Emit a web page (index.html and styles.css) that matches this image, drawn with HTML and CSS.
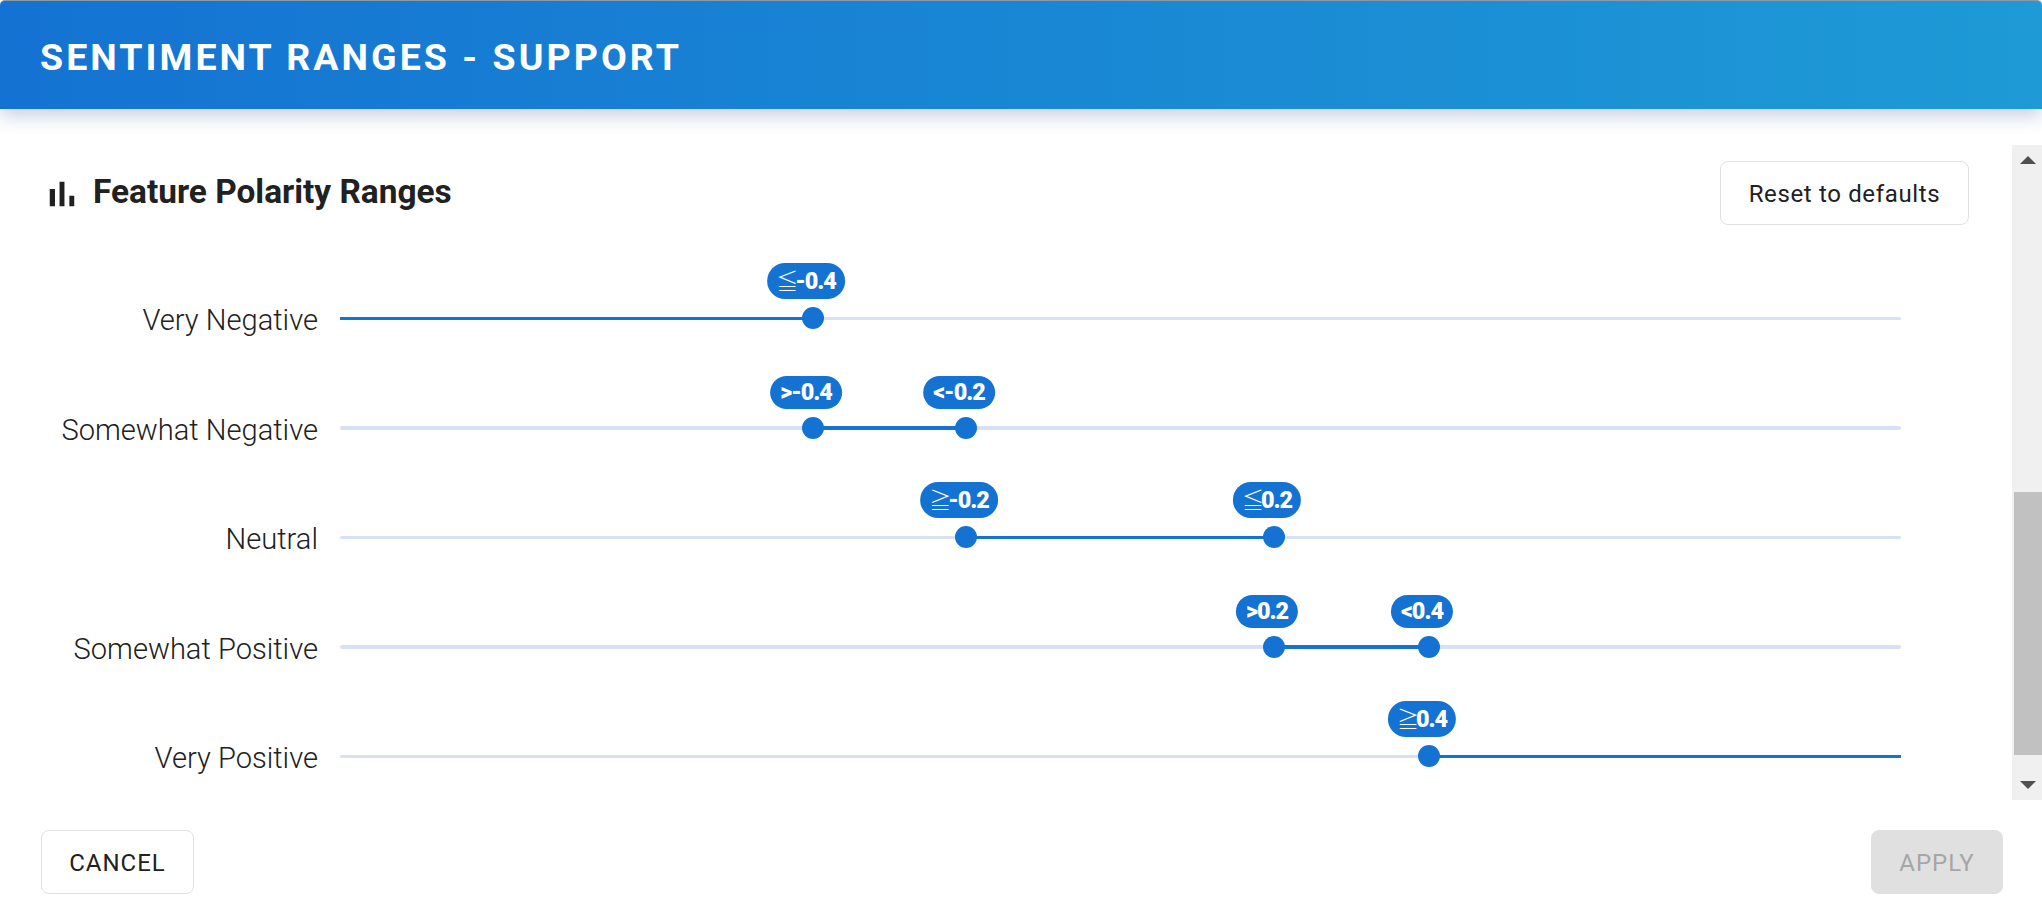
FILE: index.html
```html
<!DOCTYPE html>
<html lang="en">
<head>
<meta charset="utf-8">
<title>Sentiment Ranges - Support</title>
<link rel="stylesheet" href="styles.css">
</head>
<body>
<div class="dialog">
  <header class="dialog-header"><h1>SENTIMENT RANGES - SUPPORT</h1></header>
  <div class="dialog-main">
    <div class="content">
      <div class="title-row">
        <div class="title">
          <svg class="title-icon" viewBox="0 0 24 24"><path d="M5 9.2h3V19H5zM10.6 5h2.8v14h-2.8zm5.6 8H19v6h-2.8z"/></svg>
          <h2>Feature Polarity Ranges</h2>
        </div>
        <button class="btn reset">Reset to defaults</button>
      </div>
      <div class="rows">
        <div class="row">
          <div class="label">Very Negative</div>
          <div class="slider">
            <div class="track"></div>
            <div class="fill" style="left:0;width:473px"></div>
            <div class="thumb" style="left:473px"></div>
            <div class="badge tall" style="left:473px"><span class="sym">≦</span>-0.4</div>
          </div>
        </div>
        <div class="row">
          <div class="label">Somewhat Negative</div>
          <div class="slider">
            <div class="track"></div>
            <div class="fill" style="left:473px;width:153px"></div>
            <div class="thumb" style="left:473px"></div>
            <div class="thumb" style="left:626px"></div>
            <div class="badge" style="left:473px">&gt;-0.4</div>
            <div class="badge" style="left:626px">&lt;-0.2</div>
          </div>
        </div>
        <div class="row">
          <div class="label">Neutral</div>
          <div class="slider">
            <div class="track"></div>
            <div class="fill" style="left:626px;width:308px"></div>
            <div class="thumb" style="left:626px"></div>
            <div class="thumb" style="left:934px"></div>
            <div class="badge tall" style="left:626px"><span class="sym">≧</span>-0.2</div>
            <div class="badge tall" style="left:934px"><span class="sym">≦</span>0.2</div>
          </div>
        </div>
        <div class="row">
          <div class="label">Somewhat Positive</div>
          <div class="slider">
            <div class="track"></div>
            <div class="fill" style="left:934px;width:155px"></div>
            <div class="thumb" style="left:934px"></div>
            <div class="thumb" style="left:1089px"></div>
            <div class="badge" style="left:934px">&gt;0.2</div>
            <div class="badge" style="left:1089px">&lt;0.4</div>
          </div>
        </div>
        <div class="row">
          <div class="label">Very Positive</div>
          <div class="slider">
            <div class="track"></div>
            <div class="fill" style="left:1089px;width:472px"></div>
            <div class="thumb" style="left:1089px"></div>
            <div class="badge tall" style="left:1089px"><span class="sym">≧</span>0.4</div>
          </div>
        </div>
      </div>
    </div>
    <div class="scrollbar">
      <div class="arrow-box"><span class="arrow up"></span></div>
      <div class="scroll-rail"><div class="scroll-thumb"></div></div>
      <div class="arrow-box"><span class="arrow down"></span></div>
    </div>
  </div>
  <footer class="dialog-footer">
    <button class="btn cancel">CANCEL</button>
    <button class="btn apply" disabled>APPLY</button>
  </footer>
</div>
</body>
</html>
```
FILE: styles.css
```css
* { box-sizing: border-box; }
html, body { margin: 0; padding: 0; background: #fff; }
body { font-family: Roboto, "Noto Sans CJK JP", sans-serif; color: #212121; overflow: hidden; }
.dialog { width: 2042px; height: 922px; display: flex; flex-direction: column; overflow: hidden; }
.dialog-header {
  height: 109px; flex: none; display: flex; align-items: center; padding: 5px 40px 0;
  background: linear-gradient(90deg, #1473d2, #1e9ad6);
  border-top: 1px solid #8c9aa8; border-radius: 5px 5px 0 0;
  box-shadow: 0 7px 18px rgba(70, 100, 160, .3);
  position: relative; z-index: 1;
}
.dialog-header h1 { margin: 0; color: #fff; font-size: 37.5px; font-weight: 700; letter-spacing: 3.05px; line-height: 1; }
.dialog-main { height: 655px; flex: none; margin-top: 36px; display: flex; }
.content { width: 2012px; flex: none; overflow: hidden; }
.title-row { display: flex; justify-content: space-between; align-items: center; margin-top: 16px; height: 64px; padding: 0 43px 0 41px; }
.title { display: flex; align-items: center; gap: 10px; }
.title-icon { width: 42px; height: 42px; fill: #212121; flex: none; position: relative; top: 1px; }
.title h2 { margin: 0 0 2px; font-size: 33.4px; font-weight: 700; line-height: 1; }
.btn { font-family: inherit; border-radius: 8px; height: 64px; background: #fff; border: 1px solid #e0e0e0; color: #212121; font-size: 24px; font-weight: 400; padding: 2px 0 0; letter-spacing: 1px; }
.reset { width: 249px; letter-spacing: .65px; }
.rows { margin-top: 38.5px; }
.row { display: grid; grid-template-columns: 318px 1561px; column-gap: 22px; align-items: center; height: 109.5px; }
.label { text-align: right; font-size: 29.1px; font-weight: 300; line-height: 1; padding-top: 5px; }
.slider { position: relative; height: 22px; }
.track, .fill { position: absolute; top: 9.3px; height: 3.6px; }
.track { left: 0; right: 0; background: #d8e0f3; border-radius: 2px; }
.fill { background: #1473d2; }
.thumb { position: absolute; top: 0; width: 22px; height: 22px; margin-left: -11px; border-radius: 50%; background: #1473d2; }
.badge {
  position: absolute; bottom: 30px; transform: translateX(-50%); margin-left: -7px;
  background: #1473d2; color: #fff; font-size: 23.4px; font-weight: 900; letter-spacing: -1px; line-height: 33px; height: 33px;
  padding: 0 10px; border-radius: 17px; white-space: nowrap;
}
.badge.tall { height: 36px; line-height: 36px; border-radius: 18px; padding: 0 9px; }
.sym { font-weight: 300; font-size: 22px; margin-right: -2px; }
.scrollbar { width: 30px; flex: none; background: #f0f0f0; display: flex; flex-direction: column; }
.arrow-box { height: 30px; flex: none; display: flex; align-items: center; justify-content: center; padding-left: 2px; }
.arrow { width: 0; height: 0; border-left: 8px solid transparent; border-right: 8px solid transparent; }
.arrow.up { border-bottom: 8px solid #505050; }
.arrow.down { border-top: 8px solid #505050; }
.scroll-rail { flex: 1; display: flex; flex-direction: column; justify-content: flex-end; padding-left: 2px; }
.scroll-thumb { height: 263px; background: #c1c1c1; margin-bottom: 15px; }
.dialog-footer { flex: 1; display: flex; justify-content: space-between; padding: 30px 39px 0 41px; }
.cancel { width: 153px; }
.apply { width: 132px; background: #e0e0e0; border-color: #e0e0e0; color: #a6a6a6; }
```
